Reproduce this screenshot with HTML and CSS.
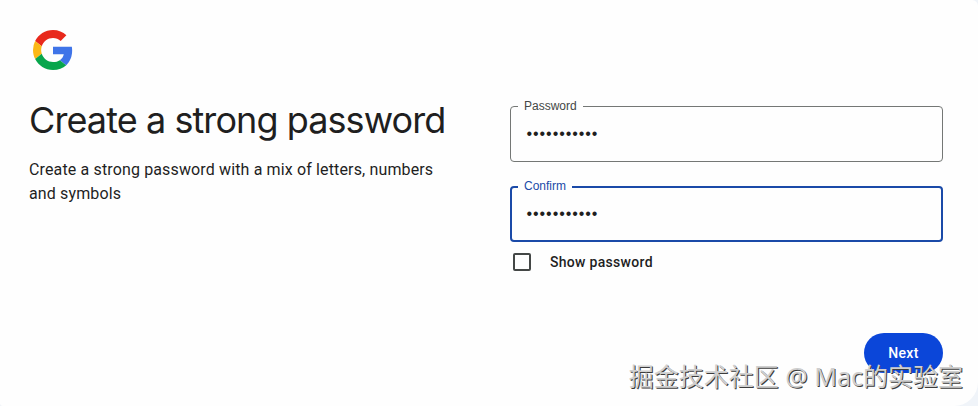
FILE: index.html
```html
<!DOCTYPE html>
<html lang="en">
<head>
<meta charset="utf-8">
<title>Create a strong password</title>
<link rel="stylesheet" href="styles.css">
</head>
<body>
<main class="card">
  <section class="intro">
    <svg class="logo" viewBox="0 0 48 48" aria-hidden="true">
      <path fill="#e8291c" d="M24 0c6.47 0 11.9 2.38 16.06 6.25L33.21 13.1C30.71 10.72 27.54 9.5 24 9.5c-6.26 0-11.57 4.22-13.46 9.91l-7.98-6.19C6.51 5.38 14.62 0 24 0z"/>
      <path fill="#3f74e8" d="M46.98 24.55c0-1.57-.15-3.09-.38-4.55H24v9.02h12.94c-.58 2.96-2.26 5.48-4.78 7.18l7.73 6c4.51-4.18 7.09-10.36 7.09-17.65z"/>
      <path fill="#fbb816" d="M10.53 28.59A14.5 14.5 0 0 1 9.77 24c0-1.6.28-3.14.76-4.59l-7.98-6.19A23.9 23.9 0 0 0 0 24c0 3.88.92 7.54 2.56 10.78l7.97-6.19z"/>
      <path fill="#08a64c" d="M24 48c6.48 0 11.93-2.13 15.89-5.81l-7.73-6c-2.15 1.45-4.92 2.3-8.16 2.3-6.26 0-11.57-4.22-13.47-9.91l-7.98 6.19C6.51 42.62 14.62 48 24 48z"/>
    </svg>
    <h1 class="title">Create a strong password</h1>
    <p class="description">Create a strong password with a mix of letters, numbers<br>and symbols</p>
  </section>
  <section class="form">
    <fieldset class="field">
      <legend class="label">Password</legend>
      <span class="dots">•••••••••••</span>
    </fieldset>
    <fieldset class="field focused">
      <legend class="label">Confirm</legend>
      <span class="dots">•••••••••••</span>
    </fieldset>
    <label class="show"><span class="box"></span><span class="show-text">Show password</span></label>
    <button class="next" type="button">Next</button>
  </section>
</main>
<div class="watermark">掘金技术社区 @ Mac的实验室</div>
</body>
</html>
```
FILE: styles.css
```css
* { box-sizing: border-box; }
body {
  margin: 0;
  width: 978px;
  height: 406px;
  overflow: hidden;
  background: #f0f4f9;
  font-family: Roboto, "Liberation Sans", sans-serif;
  color: #1f1f1f;
}
.card {
  display: flex;
  justify-content: space-between;
  height: 406px;
  padding: 30px 35px 0 29px;
  background: #fefefe;
  border-radius: 0 6px 24px 3px;
}
.intro { width: 440px; }
.logo { display: block; width: 40px; height: 40px; margin-left: 4px; }
.title {
  margin: 28px 0 0;
  font: 400 36px/44px Inter, sans-serif;
  letter-spacing: -0.92px;
  white-space: nowrap;
}
.description {
  margin: 16px 0 0;
  font-size: 16px;
  line-height: 24px;
  letter-spacing: 0.14px;
  white-space: nowrap;
}
.form { display: flex; flex-direction: column; width: 433px; padding-top: 69px; }
.field {
  height: 63px;
  min-width: 0;
  margin: 0 0 17px;
  padding: 0 0 0 7px;
  border: 1px solid #747775;
  border-radius: 4px;
}
.label {
  padding: 0 6px;
  font: 12px/14px "Liberation Sans", sans-serif;
  color: #444746;
}
.dots {
  display: block;
  padding-left: 8.5px;
  font: 16px/24px "Liberation Sans", sans-serif;
  letter-spacing: 0.93px;
  margin-top: 9px;
}
.focused { height: 63px; border: 2px solid #1a4aa8; padding-left: 6px; margin-bottom: 0; }
.focused .label { line-height: 15px; color: #1a4aa8; }
.focused .dots { margin-top: 8px; }
.show { display: flex; align-items: center; height: 40px; padding-left: 3px; }
.box { width: 18px; height: 18px; border: 2px solid #444746; border-radius: 2px; }
.show-text { margin-left: 19px; font-size: 14px; font-weight: 500; letter-spacing: 0.3px; }
.next {
  align-self: flex-end;
  width: 79px;
  height: 40px;
  margin-top: 51px;
  padding: 0;
  border: 0;
  border-radius: 20px;
  background: #0b46d9;
  color: #fff;
  font: 500 14px/20px Roboto, sans-serif;
  letter-spacing: 0.4px;
}
.watermark {
  position: absolute;
  right: 15px;
  bottom: 12px;
  font: 25px/36px "Noto Sans", "Noto Sans CJK SC", sans-serif;
  color: #cfcfcf;
  text-shadow: 1px 1px 0 #3c3c3c;
  white-space: nowrap;
}
```
